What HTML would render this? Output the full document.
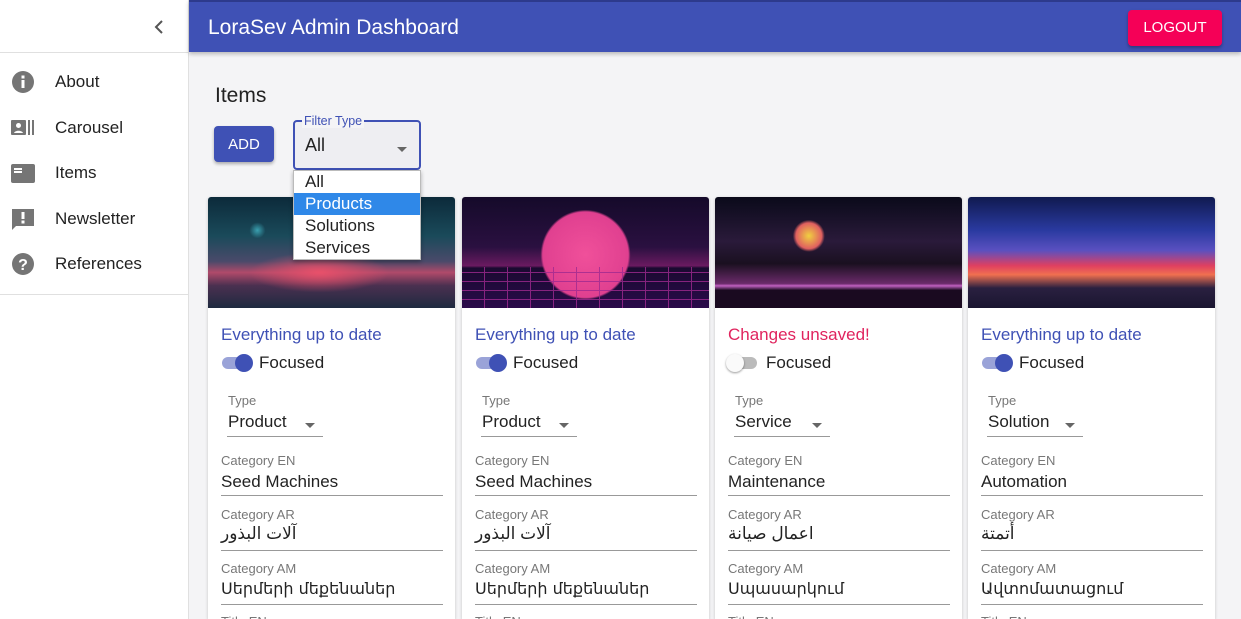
<!DOCTYPE html>
<html><head><meta charset="utf-8"><style>
*{box-sizing:border-box;margin:0;padding:0}
html,body{width:1241px;height:619px;overflow:hidden}
body{background:#f4f4f6;font-family:"Liberation Sans","DejaVu Sans",sans-serif;position:relative;color:#222}
.side{position:absolute;left:0;top:0;width:189px;height:619px;background:#fff;border-right:1px solid #e0e0e0}
.side .top{height:53px;border-bottom:1px solid #e0e0e0;position:relative}
.nav{position:relative;height:45.5px;font-size:17px;color:#222}
.nav svg{position:absolute;left:11px;top:11px}
.nav span{position:absolute;left:55px;top:13px}
.hdr{position:absolute;left:189px;top:0;width:1052px;height:52px;background:#3f51b5;border-top:2px solid #2d3a8c;box-shadow:0 2px 4px rgba(0,0,0,.25)}
.hdr h1{font-weight:400;font-size:21px;color:#fff;position:absolute;left:19px;top:14px}
.logout{position:absolute;left:939px;top:8px;width:94px;height:36px;background:#f50057;color:#fff;border-radius:4px;font-size:15px;text-align:center;line-height:36px;box-shadow:0 2px 3px rgba(0,0,0,.3)}
.card{position:absolute;top:197px;width:247px;height:422px;background:#fff;box-shadow:0 1px 3px rgba(0,0,0,.2);border-radius:3px 3px 0 0;overflow:hidden}
.img{height:111px}
.st{position:absolute;left:13px;top:128px;font-size:17px;color:#3f51b5}
.sw{position:absolute;left:14px;top:160px;width:28px;height:12px;border-radius:6px;background:#9aa3d8}
.sw::after{content:"";position:absolute;right:-3px;top:-3px;width:18px;height:18px;border-radius:50%;background:#3f51b5}
.sw.off{background:#bbb}.sw.off::after{left:-3px;right:auto;background:#fafafa;box-shadow:0 1px 2px rgba(0,0,0,.4)}
.fl{position:absolute;left:51px;top:156px;font-size:17px}
.lbl{position:absolute;font-size:13px;color:#777}
.val{position:absolute;font-size:17px;color:#222}
.ul{position:absolute;height:1px;background:#999}
.ar{position:absolute;width:0;height:0;border-left:5px solid transparent;border-right:5px solid transparent;border-top:5px solid #666}
</style></head><body>
<div class="side">
<div class="top"><svg style="position:absolute;left:152px;top:19px" width="14" height="16"><path d="M10 2L4 8l6 6" stroke="#555" stroke-width="2" fill="none"/></svg></div>
<div style="height:6px"></div>
<div class="nav"><svg width="24" height="24"><circle cx="12" cy="12" r="11" fill="#757575"/><rect x="10.5" y="10" width="3" height="8" fill="#fff"/><rect x="10.5" y="5.5" width="3" height="3" fill="#fff"/></svg><span>About</span></div>
<div class="nav"><svg width="26" height="24"><rect x="0" y="4" width="15" height="15" rx="1" fill="#757575"/><circle cx="7.5" cy="9.5" r="2.5" fill="#fff"/><path d="M3 17c1-3 8-3 9 0z" fill="#fff"/><rect x="17" y="4" width="2" height="15" fill="#757575"/><rect x="21" y="4" width="2" height="15" fill="#757575"/></svg><span>Carousel</span></div>
<div class="nav"><svg width="24" height="24"><rect x="0" y="3" width="24" height="19" rx="2" fill="#757575"/><rect x="3" y="7" width="8" height="2" fill="#fff"/><rect x="3" y="10" width="8" height="2" fill="#fff"/></svg><span>Items</span></div>
<div class="nav"><svg width="24" height="24"><path d="M1 2h22v17H5l-4 4z" fill="#757575"/><rect x="10.5" y="5" width="3" height="7" fill="#fff"/><rect x="10.5" y="13.5" width="3" height="3" fill="#fff"/></svg><span>Newsletter</span></div>
<div class="nav"><svg width="24" height="24"><circle cx="12" cy="12" r="11" fill="#757575"/><text x="12" y="18" text-anchor="middle" font-size="16" font-weight="bold" fill="#fff" font-family="Liberation Sans">?</text></svg><span>References</span></div>
<div style="position:absolute;top:294px;left:0;width:188px;height:1px;background:#e0e0e0"></div>
</div>
<div class="hdr"><h1>LoraSev Admin Dashboard</h1><div class="logout">LOGOUT</div></div>
<div style="position:absolute;left:215px;top:84px;font-size:21px;color:#222">Items</div>
<div style="position:absolute;left:214px;top:126px;width:60px;height:36px;background:#3f51b5;color:#fff;border-radius:4px;font-size:15px;text-align:center;line-height:37px;box-shadow:0 2px 3px rgba(0,0,0,.3)">ADD</div>
<div style="position:absolute;left:293px;top:120px;width:128px;height:50px;border:2px solid #3f51b5;border-radius:4px;background:#eeeef2"></div>
<div style="position:absolute;left:302px;top:114px;font-size:12.5px;color:#3f51b5;background:#f4f4f6;padding:0 2px">Filter Type</div>
<div style="position:absolute;left:305px;top:135px;font-size:18px">All</div>
<div class="ar" style="left:397px;top:147px"></div>
<div style="position:absolute;left:293px;top:170px;width:128px;height:90px;background:#fff;border:1px solid #bbb;box-shadow:0 2px 4px rgba(0,0,0,.3);font-size:17px;z-index:5">
<div style="height:22px;padding-left:11px;line-height:21px">All</div>
<div style="height:22px;padding-left:11px;line-height:21px;background:#2f88e8;color:#fff">Products</div>
<div style="height:22px;padding-left:11px;line-height:21px">Solutions</div>
<div style="height:22px;padding-left:11px;line-height:21px">Services</div>
</div>

<div class="card" style="left:208px"><div class="img" style="background:radial-gradient(circle 8px at 20% 30%,#3aa0b0,transparent),radial-gradient(ellipse 70px 20px at 45% 68%,#e8506a,transparent),linear-gradient(#0c2a3a 0%,#1a4a5a 35%,#4a4a6a 58%,#b04a6a 68%,#4a3050 80%,#1e2a40 100%)"></div>
<div class="st">Everything up to date</div><div class="sw"></div><div class="fl">Focused</div>
<div class="lbl" style="left:20px;top:196px">Type</div><div class="val" style="left:20px;top:215px">Product</div><div class="ar" style="left:97px;top:226px"></div><div class="ul" style="left:19px;top:239px;width:96px"></div>
<div class="lbl" style="left:13px;top:256px">Category EN</div><div class="val" style="left:13px;top:275px">Seed Machines</div><div class="ul" style="left:13px;top:298px;width:222px"></div>
<div class="lbl" style="left:13px;top:310px">Category AR</div><div class="val" style="left:13px;top:327px">آلات البذور</div><div class="ul" style="left:13px;top:353px;width:222px"></div>
<div class="lbl" style="left:13px;top:364px">Category AM</div><div class="val" style="left:13px;top:382px;font-family:'DejaVu Sans',sans-serif;font-size:16px">Սերմերի մեքենաներ</div><div class="ul" style="left:13px;top:407px;width:222px"></div>
<div class="lbl" style="left:13px;top:417px">Title EN</div>
</div>
<div class="card" style="left:462px"><div class="img" style="background:radial-gradient(circle 45px at 50% 52%,#f0509a 0,#e04090 95%,transparent 100%),linear-gradient(#150a2a 0%,#2a1040 45%,#6a1a60 62%,#1a0a30 64%,#2a0a4a 100%)"><div style="height:70px"></div><div style="height:41px;background:repeating-linear-gradient(90deg,transparent 0 22px,#a02a90 22px 23px),repeating-linear-gradient(0deg,transparent 0 8px,#a02a90 8px 9px);opacity:.8"></div></div>
<div class="st">Everything up to date</div><div class="sw"></div><div class="fl">Focused</div>
<div class="lbl" style="left:20px;top:196px">Type</div><div class="val" style="left:20px;top:215px">Product</div><div class="ar" style="left:97px;top:226px"></div><div class="ul" style="left:19px;top:239px;width:96px"></div>
<div class="lbl" style="left:13px;top:256px">Category EN</div><div class="val" style="left:13px;top:275px">Seed Machines</div><div class="ul" style="left:13px;top:298px;width:222px"></div>
<div class="lbl" style="left:13px;top:310px">Category AR</div><div class="val" style="left:13px;top:327px">آلات البذور</div><div class="ul" style="left:13px;top:353px;width:222px"></div>
<div class="lbl" style="left:13px;top:364px">Category AM</div><div class="val" style="left:13px;top:382px;font-family:'DejaVu Sans',sans-serif;font-size:16px">Սերմերի մեքենաներ</div><div class="ul" style="left:13px;top:407px;width:222px"></div>
<div class="lbl" style="left:13px;top:417px">Title EN</div>
</div>
<div class="card" style="left:715px"><div class="img" style="background:radial-gradient(circle 16px at 38% 35%,#f0d040,#e06060 80%,transparent 100%),linear-gradient(#0a0a1a 0%,#2a1a3a 40%,#1a1020 60%,#6a2a6a 78%,#c060c0 80%,#1a0a20 84%,#1a0a20 100%)"></div>
<div class="st" style="color:#e0245e">Changes unsaved!</div><div class="sw off"></div><div class="fl">Focused</div>
<div class="lbl" style="left:20px;top:196px">Type</div><div class="val" style="left:20px;top:215px">Service</div><div class="ar" style="left:97px;top:226px"></div><div class="ul" style="left:19px;top:239px;width:96px"></div>
<div class="lbl" style="left:13px;top:256px">Category EN</div><div class="val" style="left:13px;top:275px">Maintenance</div><div class="ul" style="left:13px;top:298px;width:222px"></div>
<div class="lbl" style="left:13px;top:310px">Category AR</div><div class="val" style="left:13px;top:327px">اعمال صيانة</div><div class="ul" style="left:13px;top:353px;width:222px"></div>
<div class="lbl" style="left:13px;top:364px">Category AM</div><div class="val" style="left:13px;top:382px;font-family:'DejaVu Sans',sans-serif;font-size:16px">Սպասարկում</div><div class="ul" style="left:13px;top:407px;width:222px"></div>
<div class="lbl" style="left:13px;top:417px">Title EN</div>
</div>
<div class="card" style="left:968px"><div class="img" style="background:linear-gradient(#101a50 0%,#2a3aa0 30%,#5a50c0 48%,#e04060 62%,#f07050 70%,#2a2040 82%,#1a1530 100%)"></div>
<div class="st">Everything up to date</div><div class="sw"></div><div class="fl">Focused</div>
<div class="lbl" style="left:20px;top:196px">Type</div><div class="val" style="left:20px;top:215px">Solution</div><div class="ar" style="left:97px;top:226px"></div><div class="ul" style="left:19px;top:239px;width:96px"></div>
<div class="lbl" style="left:13px;top:256px">Category EN</div><div class="val" style="left:13px;top:275px">Automation</div><div class="ul" style="left:13px;top:298px;width:222px"></div>
<div class="lbl" style="left:13px;top:310px">Category AR</div><div class="val" style="left:13px;top:327px">أتمتة</div><div class="ul" style="left:13px;top:353px;width:222px"></div>
<div class="lbl" style="left:13px;top:364px">Category AM</div><div class="val" style="left:13px;top:382px;font-family:'DejaVu Sans',sans-serif;font-size:16px">Ավտոմատացում</div><div class="ul" style="left:13px;top:407px;width:222px"></div>
<div class="lbl" style="left:13px;top:417px">Title EN</div>
</div>
</body></html>
